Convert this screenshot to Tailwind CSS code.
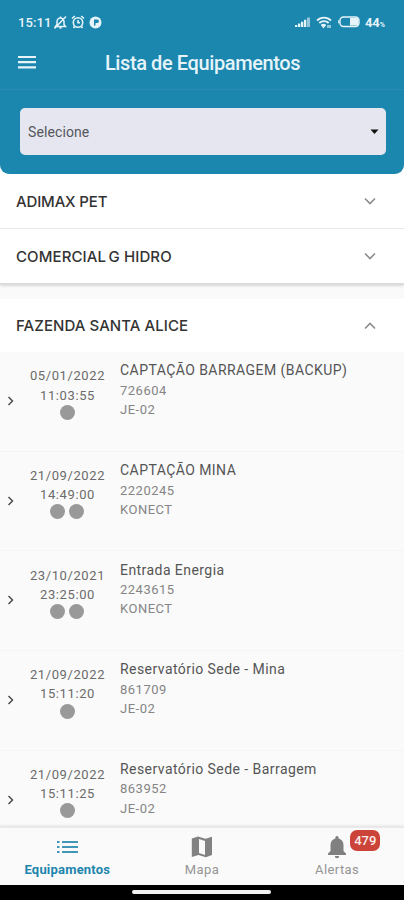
<!DOCTYPE html>
<html lang="pt-BR">
<head>
<meta charset="utf-8">
<meta name="viewport" content="width=device-width, initial-scale=1">
<title>Lista de Equipamentos</title>
<script src="https://cdn.jsdelivr.net/npm/@tailwindcss/browser@4"></script>
</head>
<body class="w-[404px] h-[900px] overflow-hidden bg-white font-[Roboto,'Liberation_Sans',sans-serif] flex flex-col">
<header class="h-[174px] shrink-0 bg-[#1b86ae] rounded-b-[9px] text-[#e6f4fa]">
  <div class="h-[36px] pt-[14px] pl-[18px] pr-[19px] flex items-start justify-between">
    <div class="flex items-center h-4">
      <span class="text-[13px] font-medium tracking-[0.1px] leading-4 pt-[1px] w-[35px] whitespace-nowrap">15:11</span>
      <svg class="w-[15px] h-[15px]" viewBox="0 0 15 15" fill="none" stroke="currentColor" stroke-width="1.5"><path d="M2.5 11.5h10L11 9.500V6.500a3.500 3.500 0 0 0-7 0v3zM7.500 1.500v1.500M6.500 13h2M13 1.500 1.500 13.500"/></svg>
      <svg class="w-[14px] h-[14px] ml-[3px]" viewBox="0 0 14 14" fill="none" stroke="currentColor" stroke-width="1.600"><circle cx="7" cy="7.500" r="4.700"/><path d="M1 3.500 3.800 1M13 3.500 10.200 1M7 5v2.800h2M3.500 11.500 2.500 13M10.500 11.500l1 1.500"/></svg>
      <svg class="w-[13px] h-[13px] ml-[4px]" viewBox="0 0 13 13"><circle cx="6.500" cy="6.500" r="6" fill="currentColor"/><path d="M5 3.500h3.200a1.600 1.600 0 0 1 0 3.500H6.500v2.500H5z" fill="#1b86ae"/></svg>
    </div>
    <div class="flex items-center h-4">
      <svg class="w-[16px] h-[12px]" viewBox="0 0 16 12" fill="currentColor"><path d="M0 9h2.300v2H0zM3 7.500h2.300V11H3zM6 5.800h2.300V11H6zM9 3.800h2.300V11H9z"/><path d="M12 1.500h3V11h-3z" opacity=".6"/></svg>
      <svg class="w-[16px] h-[13px] ml-[5px]" viewBox="0 0 16 13" fill="none" stroke="currentColor" stroke-width="1.800"><path d="M1 4.500a10 10 0 0 1 14 0M3.300 7a6.600 6.600 0 0 1 9.400 0M5.500 9.300a3.500 3.500 0 0 1 4 0"/><path d="M6 9.500h3L7.500 11.500zM12 9v3M14 9v3" stroke-width="1.200"/></svg>
      <svg class="w-[22px] h-[12px] ml-[6px]" viewBox="0 0 22 12"><rect x="2" y="1" width="19" height="9.500" rx="3.500" fill="none" stroke="currentColor" stroke-width="1.400"/><path d="M12 2h6.500a2 2 0 0 1 2 2v3.500a2 2 0 0 1-2 2H12z" fill="currentColor"/><path d="M.7 4.300v3" stroke="currentColor" stroke-width="1.200"/></svg>
      <span class="text-[13px] font-bold leading-4 ml-[5px] pt-[3px]">44<span class="text-[7px]">%</span></span>
    </div>
  </div>
  <div class="h-[54px] border-b border-[#2b8cb3] relative flex items-center justify-center">
    <svg class="absolute left-[18px] top-[18px] w-[19px] h-[16px]" viewBox="0 0 19 16" fill="none" stroke="currentColor" stroke-width="2.200"><path d="M0 3h18M0 8.200h18M0 13.400h18"/></svg>
    <h1 class="text-[20px] font-medium tracking-[-0.4px] leading-6 whitespace-nowrap pl-[1px]">Lista de Equipamentos</h1>
  </div>
  <div class="mt-[18px] ml-[20px] w-[366px] h-[47px] rounded-[5px] bg-[#e5e6ef] pl-[8px] pr-[7px] flex items-center justify-between text-[#55565c]">
    <span class="text-[14px] tracking-[0.1px] pt-[1px]">Selecione</span>
    <svg class="w-[9px] h-[6px]" viewBox="0 0 9 6"><path d="M.5 .5h8L4.500 5z" fill="#111"/></svg>
  </div>
</header>
<main class="flex-1 min-h-0 overflow-hidden bg-[#fafafa] text-[#333] font-[Inter,sans-serif]">
  <section class="bg-white border-b-2 border-[#dcdcdc] shadow-sm mb-[14px]">
    <div class="h-[55px] border-b border-[#e8e8e8] pl-[16px] pr-[28px] flex items-center justify-between">
      <h2 class="text-[15px] tracking-[-0.15px] font-medium pt-[2px]">ADIMAX PET</h2>
      <svg class="w-[12px] h-[8px]" viewBox="0 0 12 8" fill="none" stroke="#8c8c8c" stroke-width="1.600"><path d="m1 1.500 5 5 5-5"/></svg>
    </div>
    <div class="h-[54px] pl-[16px] pr-[28px] flex items-center justify-between">
      <h2 class="text-[15px] tracking-[0.1px] font-medium pt-[2px]">COMERCIAL<span class="tracking-[-1.500px]"> </span>G HIDRO</h2>
      <svg class="w-[12px] h-[8px]" viewBox="0 0 12 8" fill="none" stroke="#8c8c8c" stroke-width="1.600"><path d="m1 1.500 5 5 5-5"/></svg>
    </div>
  </section>
  <section>
    <div class="h-[53px] bg-white pl-[16px] pr-[28px] flex items-center justify-between">
      <h2 class="text-[15px] tracking-[0.060px] font-medium pt-[2px]">FAZENDA SANTA ALICE</h2>
      <svg class="w-[12px] h-[8px]" viewBox="0 0 12 8" fill="none" stroke="#8c8c8c" stroke-width="1.600"><path d="m1 6.500 5-5 5 5"/></svg>
    </div>
    <div id="list" class="font-[Roboto,sans-serif]"></div>
  </section>
</main>
<nav class="h-[59px] shrink-0 bg-[#fafafa] border-t-2 border-[#e9e9e9] grid grid-cols-3 text-[13px] text-[#959595] z-10 shadow-[0_-1px_2px_#00000010]">
  <div class="flex flex-col items-center text-[#2185ad] font-bold">
    <svg class="mt-[12px] w-[21px] h-[15px]" viewBox="0 0 21 15" fill="none" stroke="currentColor" stroke-width="2"><path d="M0 2h2.500M5 2h16M0 7h2.500M5 7h16M0 12h2.500M5 12h16" opacity=".85"/></svg>
    <span class="mt-[7px] leading-4 tracking-[0.2px]">Equipamentos</span>
  </div>
  <div class="flex flex-col items-center">
    <svg class="mt-[8px] w-[22px] h-[22px] ml-[1px]" viewBox="0 0 22 22" fill="#828282"><path fill-rule="evenodd" d="M.8 2.500 7 0.500l7.500 2.300L21 .8V19l-6.200 2.200L7.500 19 .8 21zM8 3v14l6 2V5z"/></svg>
    <span class="mt-[4px] leading-4 tracking-[0.400px]">Mapa</span>
  </div>
  <div class="flex flex-col items-center relative">
    <svg class="mt-[8px] w-[20px] h-[23px] ml-[1px]" viewBox="0 0 20 23" fill="#808080"><path d="M10 0a1.700 1.700 0 0 1 1.700 1.700v.8c3 .8 4.800 3.300 4.800 6.500v6l2.500 2.500V19H1v-1.500L3.500 15V9c0-3.200 1.800-5.700 4.800-6.500v-.8A1.700 1.700 0 0 1 10 0zM7.800 20h4.400a2.200 2.200 0 0 1-4.400 0z"/></svg>
    <span class="mt-[3px] leading-4 tracking-[0.400px] pl-[1px]">Alertas</span>
    <span class="absolute left-[81px] top-[2px] w-[30px] h-[21px] rounded-[7px] bg-[#cc4339] text-[#fbeceb] text-[13px] font-medium flex items-center justify-center">479</span>
  </div>
</nav>
<footer class="h-[15px] shrink-0 bg-black pt-[5px] flex items-start justify-center"><div class="w-[139px] h-[4px] mr-[1px] rounded-full bg-[#f2f2f2]"></div></footer>
<script>
const items = [
  ["05/01/2022", "11:03:55", 1, "CAPTAÇÃO BARRAGEM (BACKUP)", "726604", "JE-02"],
  ["21/09/2022", "14:49:00", 2, "CAPTAÇÃO MINA", "2220245", "KONECT"],
  ["23/10/2021", "23:25:00", 2, "Entrada Energia", "2243615", "KONECT"],
  ["21/09/2022", "15:11:20", 1, "Reservatório Sede - Mina", "861709", "JE-02"],
  ["21/09/2022", "15:11:25", 1, "Reservatório Sede - Barragem", "863952", "JE-02"]
];
const dot = '<i class="block w-[15px] h-[15px] rounded-full bg-[#999]"></i>';
document.getElementById("list").innerHTML = items.map(([date, time, n, name, code, model]) => `
  <article class="h-[99.650px] border-b border-[#f4f4f4] flex items-start">
    <svg class="w-[8px] h-[10px] ml-[7px] mt-[44px] shrink-0" viewBox="0 0 8 10" fill="none" stroke="#444" stroke-width="1.400"><path d="m1.500 1 4 4-4 4"/></svg>
    <div class="w-[90px] ml-[7px] pt-[14.300px] shrink-0 flex flex-col items-center text-[13px] leading-[19.200px] tracking-[0.6px] text-[#6b6b6b] whitespace-nowrap"><span class="pl-[1px]">${date}</span><span class="pl-[1px]">${time}</span><div class="flex gap-[4px]">${dot.repeat(n)}</div></div>
    <div class="ml-[8px] pt-[9.400px] text-[13px] leading-[19.300px] tracking-[0.5px] text-[#858585] whitespace-nowrap"><div class="text-[14px] leading-[19.500px] tracking-[0.44px] text-[#555]">${name}</div><div>${code}</div><div>${model}</div></div>
  </article>`).join("");
</script>
</body>
</html>
